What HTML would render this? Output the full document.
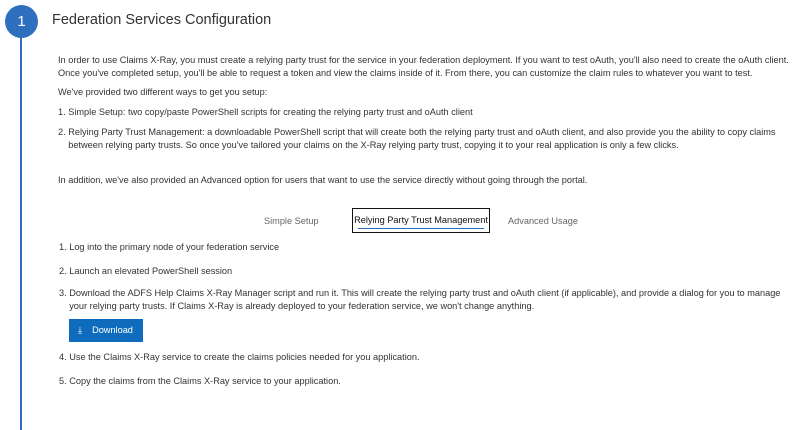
<!DOCTYPE html>
<html><head><style>
body{margin:0;width:800px;height:407px;background:#fff;font-family:"Liberation Sans",sans-serif;color:#333;position:relative;overflow:hidden}
.line{position:absolute;left:20px;top:30px;width:2px;height:400px;background:#2f6fbf}
.circle{position:absolute;left:5px;top:5px;width:33px;height:33px;border-radius:50%;background:#2f6fbf;color:#fff;font-size:15px;line-height:33px;text-align:center}
h1{position:absolute;left:52px;top:12px;margin:0;font-weight:normal;font-size:14.5px;color:#333}
.t{position:absolute;left:58px;font-size:9.2px;line-height:13px;white-space:nowrap}
.tab{position:absolute;top:216px;font-size:9.2px;color:#666}
.act{position:absolute;left:352px;top:208px;width:138px;height:25px;border:1px solid #111;box-sizing:border-box;font-size:9.2px;color:#111;text-align:center;line-height:23px}
.act:after{content:"";position:absolute;left:5px;right:5px;bottom:3px;height:1px;background:#2f6fbf}
.btn{position:absolute;left:69px;top:319px;width:74px;height:23px;background:#0f6cbd;color:#fff;font-size:9.2px;line-height:23px}
</style></head><body>
<div class="line"></div><div class="circle">1</div>
<h1>Federation Services Configuration</h1>
<div class="t" style="top:54px">In order to use Claims X-Ray, you must create a relying party trust for the service in your federation deployment. If you want to test oAuth, you'll also need to create the oAuth client.<br>Once you've completed setup, you'll be able to request a token and view the claims inside of it. From there, you can customize the claim rules to whatever you want to test.</div>
<div class="t" style="top:86px">We've provided two different ways to get you setup:</div>
<div class="t" style="top:106px">1. Simple Setup: two copy/paste PowerShell scripts for creating the relying party trust and oAuth client</div>
<div class="t" style="top:126px">2. Relying Party Trust Management: a downloadable PowerShell script that will create both the relying party trust and oAuth client, and also provide you the ability to copy claims<br>&nbsp;&nbsp;&nbsp;&nbsp;between relying party trusts. So once you've tailored your claims on the X-Ray relying party trust, copying it to your real application is only a few clicks.</div>
<div class="t" style="top:174px">In addition, we've also provided an Advanced option for users that want to use the service directly without going through the portal.</div>
<div class="tab" style="left:264px">Simple Setup</div>
<div class="act">Relying Party Trust Management</div>
<div class="tab" style="left:508px">Advanced Usage</div>
<div class="t" style="top:241px;left:59px">1. Log into the primary node of your federation service</div>
<div class="t" style="top:265px;left:59px">2. Launch an elevated PowerShell session</div>
<div class="t" style="top:287px;left:59px">3. Download the ADFS Help Claims X-Ray Manager script and run it. This will create the relying party trust and oAuth client (if applicable), and provide a dialog for you to manage<br>&nbsp;&nbsp;&nbsp;&nbsp;your relying party trusts. If Claims X-Ray is already deployed to your federation service, we won't change anything.</div>
<div class="btn"><span style="margin-left:9px">&#10515;</span><span style="margin-left:10px">Download</span></div>
<div class="t" style="top:351px;left:59px">4. Use the Claims X-Ray service to create the claims policies needed for you application.</div>
<div class="t" style="top:375px;left:59px">5. Copy the claims from the Claims X-Ray service to your application.</div>
</body></html>
